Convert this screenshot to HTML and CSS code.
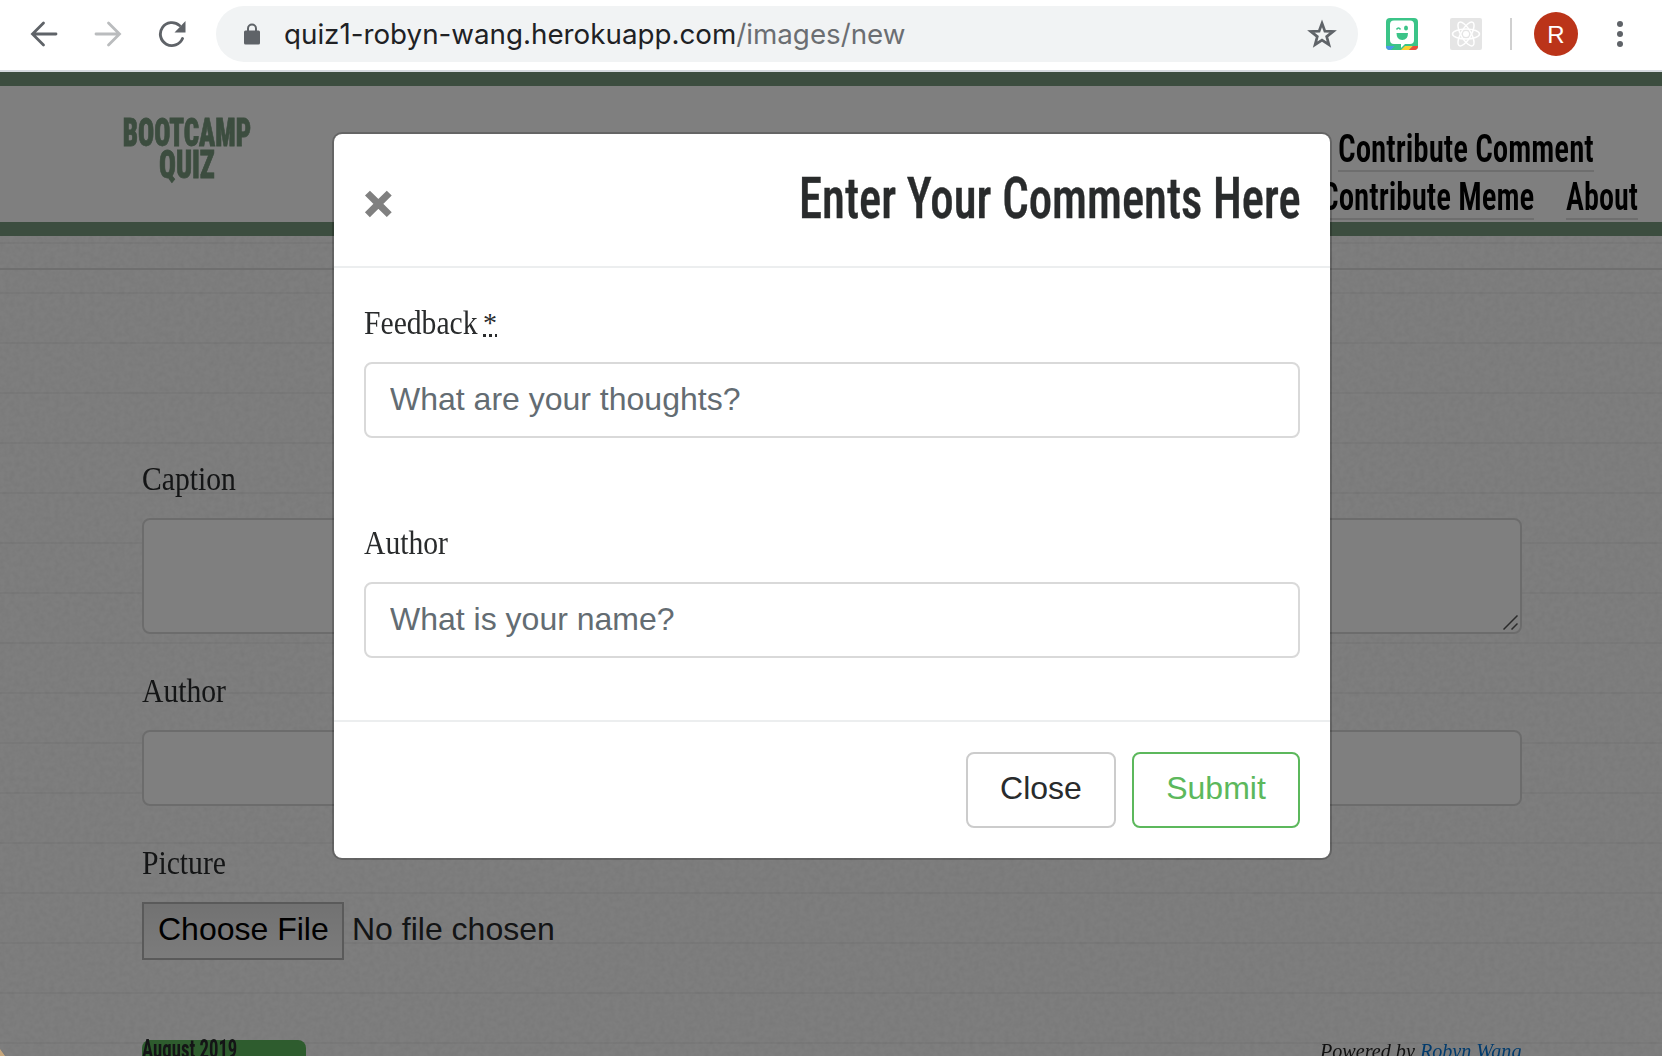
FILE: index.html
```html
<!DOCTYPE html>
<html lang="en">
<head>
<meta charset="utf-8">
<title>Bootcamp Quiz</title>
<link rel="stylesheet" href="styles.css">
</head>
<body>
<div class="toolbar">
  <div class="nav-icons">
    <svg width="28" height="28" viewBox="0 0 28 28" fill="none" stroke="#5f6368" stroke-width="2.8" stroke-linecap="round"><path d="M26 14H3.500M13.500 3L2.500 14l11 11"/></svg>
    <svg width="28" height="28" viewBox="0 0 28 28" fill="none" stroke="#babcbe" stroke-width="2.800" stroke-linecap="round"><path d="M2 14h22.500M14.500 3l11 11-11 11"/></svg>
    <svg width="28" height="28" viewBox="0 0 28 28"><path d="M24.500 18.500A11.500 11.500 0 1 1 21.500 5.500" fill="none" stroke="#5f6368" stroke-width="2.900" stroke-linecap="round"/><path d="M27.500 1v11.500H16.500z" fill="#5f6368"/></svg>
  </div>
  <div class="omnibox">
    <svg class="lock" width="16" height="22" viewBox="0 0 16 22"><path d="M4 9V5.500a4 4 0 0 1 8 0V9" fill="none" stroke="#5f6368" stroke-width="2"/><rect y="7.500" width="16" height="14" rx="1.500" fill="#5f6368"/></svg>
    <div class="url">quiz1-robyn-wang.herokuapp.com<span class="path">/images/new</span></div>
    <svg class="star" width="30" height="30" viewBox="0 0 30 30"><path d="M15 4.300l2.900 7.800 8.300.3-6.500 5.200 2.200 8-6.900-4.500-6.900 4.500 2.200-8-6.500-5.200 8.300-.3z" fill="none" stroke="#5f6368" stroke-width="2.700"/></svg>
  </div>
  <svg class="ext" width="32" height="32" viewBox="0 0 32 32">
    <defs><clipPath id="tile"><rect width="32" height="32" rx="4"/></clipPath></defs>
    <g clip-path="url(#tile)"><rect width="32" height="32" fill="#3bc488"/><path d="M0 28h9l-4 4H0z" fill="#4a9ae8"/><path d="M9 28h10l-4 4H5z" fill="#3bc488"/><path d="M19 28h8l-4 4h-8z" fill="#fdd130"/><path d="M27 28h5v4h-9z" fill="#ee4b3c"/></g>
    <path d="M8 2.500h16a4 4 0 0 1 4 4V22a4 4 0 0 1-4 4h-5l-4 4v-4H8a4 4 0 0 1-4-4V6.500a4 4 0 0 1 4-4z" fill="#fff"/>
    <path d="M10.500 15h11.500q0 7-5.750 7T10.500 15z" fill="#3bc488"/><ellipse cx="20" cy="10" rx="2" ry="2.500" fill="#3bc488"/><path d="M10.500 11.500q2-3 4 0" fill="none" stroke="#3bc488" stroke-width="1.600"/>
  </svg>
  <svg class="ext" width="32" height="32" viewBox="0 0 32 32"><rect width="32" height="32" rx="2" fill="#e5e5e5"/><g fill="none" stroke="#fff" stroke-width="1.500"><ellipse cx="16" cy="16" rx="13.500" ry="5"/><ellipse cx="16" cy="16" rx="13.500" ry="5" transform="rotate(60 16 16)"/><ellipse cx="16" cy="16" rx="13.500" ry="5" transform="rotate(120 16 16)"/></g><circle cx="16" cy="16" r="3" fill="#fff"/></svg>
  <div class="divider"></div>
  <div class="avatar">R</div>
  <svg class="dots" width="6" height="26" viewBox="0 0 6 26" fill="#5f6368"><circle cx="3" cy="3" r="3"/><circle cx="3" cy="13" r="3"/><circle cx="3" cy="23" r="3"/></svg>
</div>

<div class="page">
  <svg class="grain" width="100%" height="100%"><filter id="noise" x="0" y="0" width="100%" height="100%"><feTurbulence type="fractalNoise" baseFrequency="0.2" numOctaves="2" seed="4"/><feColorMatrix values="0 0 0 0 0  0 0 0 0 0  0 0 0 0 0  0.07 0 0 0 -0.02"/></filter><rect width="100%" height="100%" filter="url(#noise)"/></svg>
  <header class="site-header">
    <div class="logo"><span class="word">BOOTCAMP</span><span class="word quiz">QUIZ</span></div>
    <nav class="menu">
      <div class="menu-row first"><a class="link comment"><span>Contribute Comment</span></a></div>
      <div class="menu-row"><a class="link meme"><span>Contribute Meme</span></a><a class="link about"><span>About</span></a></div>
    </nav>
  </header>
  <hr class="rule">
  <main class="form">
    <label class="label"><span>Caption</span></label>
    <div class="field area"><svg class="grip" width="15" height="15" viewBox="0 0 15 15" stroke="#555" stroke-width="1.500"><path d="M0.500 14.500l14-14M8.500 14.500l6-6"/></svg></div>
    <label class="label"><span>Author</span></label>
    <div class="field"></div>
    <label class="label"><span>Picture</span></label>
    <div class="file"><span class="choose">Choose File</span><span class="none">No file chosen</span></div>
  </main>
  <footer class="footer">
    <div class="month"><span>August 2019</span></div>
    <div class="powered"><span>Powered by <a class="author">Robyn Wang</a></span></div>
  </footer>
</div>

<div class="backdrop">
  <div class="modal">
    <div class="modal-header"><button class="x">×</button><h2 class="title"><span>Enter Your Comments Here</span></h2></div>
    <div class="modal-body">
      <label class="label required"><span>Feedback</span><abbr>*</abbr></label>
      <input class="field" placeholder="What are your thoughts?">
      <label class="label second"><span>Author</span></label>
      <input class="field" placeholder="What is your name?">
    </div>
    <div class="modal-footer"><button class="btn close">Close</button><button class="btn submit">Submit</button></div>
  </div>
</div>
<div class="corner"></div>
</body>
</html>
```

FILE: styles.css
```css
* { box-sizing: border-box; }
body { margin: 0; height: 1056px; overflow: hidden; display: flex; flex-direction: column; position: relative; font: 32px "Liberation Sans", Arial, sans-serif; color: #292b2c; background: #fff; }
svg { display: block; flex: none; }

/* Browser toolbar */
.toolbar { flex: none; height: 72px; padding: 0 39px 2px 30px; border-bottom: 2px solid #d5d9de; display: flex; align-items: flex-start; background: #fff; }
.nav-icons { display: flex; gap: 36px; width: 186px; padding-top: 20px; }
.omnibox { width: 1142px; height: 56px; margin-top: 6px; border-radius: 28px; background: #f1f3f4; display: flex; }
.lock { margin: 17px 0 0 28px; }
.url { margin-left: 24px; flex: 1; font: 27.75px/56px Inter, sans-serif; color: #202124; white-space: nowrap; }
.path { color: #6b6e72; }
.star { margin: 13px 21px 0 0; }
.ext { margin: 18px 0 0 28px; }
.ext + .ext { margin-left: 32px; }
.divider { width: 2px; height: 32px; margin: 18px 0 0 28px; background: #d0d0d0; }
.avatar { width: 44px; height: 44px; margin: 12px 0 0 22px; border-radius: 50%; background: #bb3419; color: #fff; font: 24px/45px "Liberation Sans", sans-serif; text-align: center; }
.dots { margin: 21px 0 0 39px; }

/* Page under the modal */
.page { flex: 1; min-height: 0; overflow: hidden; position: relative; background: #fdfdfd repeating-linear-gradient(transparent 0 20px, #f3f3f3 20px 22px, transparent 22px 50px) 0 150px no-repeat; }
.grain { position: absolute; inset: 0; }
.site-header { position: relative; height: 164px; border: solid #789a7e; border-width: 14px 0; background: #fff; display: flex; justify-content: space-between; font-family: Roboto, sans-serif; font-stretch: 75%; font-size: 38px; color: #000; }
.logo { width: 129px; margin: 31px 0 0 122px; display: flex; flex-direction: column; align-items: center; font-weight: 900; line-height: 32px; color: #789a7e; -webkit-text-stroke: .8px #789a7e; }
.word { transform: scaleX(.705); }
.quiz { transform: scaleX(.735); }
.menu { padding-top: 39px; margin-right: 24px; font-weight: 600; line-height: 48px; }
.menu-row { display: flex; justify-content: flex-end; gap: 32px; height: 48px; }
.first { padding-right: 44px; }
.link { height: 47px; border-bottom: 2px solid #dcdcdc; white-space: nowrap; }
.link span, .label span, .month span, .powered span, .title span { display: inline-block; transform-origin: left; }
.comment { width: 256px; }
.meme { width: 213px; }
.about { width: 72px; }
.link span { transform: scaleX(.815); }
.about span { transform: scaleX(.796); }
.rule { position: relative; margin: 32px 0 0; border: 0; height: 2px; background: #dfdfdf; }
.form { position: relative; padding: 184px 140px 0 142px; }
.label { display: flex; height: 50px; margin: 0 0 14px; font: 33px/50px "Liberation Serif", serif; white-space: nowrap; }
.label span { transform: scaleX(.898); }
.field { display: block; width: 100%; height: 76px; border: 2px solid #d9d9d9; border-radius: 8px; background: #fff; font: 32px "Liberation Sans", Arial, sans-serif; padding: 0 24px 2px; outline: 0; }
.field::placeholder { color: #636c72; opacity: 1; }
.area { height: 116px; padding: 0 2px 2px 0; display: flex; align-items: flex-end; justify-content: flex-end; }
.form .field + .label { margin-top: 32px; }
.file { display: flex; height: 58px; line-height: 50px; }
.choose { width: 202px; border: 2px solid #b5b5b5; padding-left: 14px; color: #000; background: linear-gradient(#e4e4e4, #f8f8f8); white-space: nowrap; }
.none { margin-left: 8px; line-height: 54px; }
.footer { position: relative; margin-top: 80px; padding: 0 140px 0 142px; display: flex; justify-content: space-between; }
.month { width: 164px; height: 60px; border-radius: 8px; background: #5cb85c; font: 700 26px/19px Roboto, sans-serif; font-stretch: 75%; white-space: nowrap; }
.month span { transform: scaleX(.72); }
.powered { width: 202px; font: italic 22px/22px "Liberation Serif", serif; white-space: nowrap; color: #222; }
.powered span { transform: scaleX(.915); }
.author { color: #0275d8; }

/* Modal */
.backdrop { position: absolute; inset: 72px 0 0; padding: 60px 330px 0 332px; background: rgba(0, 0, 0, .5); }
.modal { width: 1000px; height: 728px; border: 2px solid rgba(0, 0, 0, .2); border-radius: 10px; background: #fff; background-clip: padding-box; }
.modal-header { height: 134px; padding: 32px 30px 0; border-bottom: 2px solid #eceeef; display: flex; justify-content: space-between; }
.x { margin: 5px 0 0; padding: 0; border: 0; background: none; width: 28px; height: 64px; font: bold 49px/64px "Liberation Sans", Arial, sans-serif; color: #808080; -webkit-text-stroke: 1.6px #808080; }
.title { margin: 1px 0 0; width: 501px; font: 500 57px/64px Roboto, sans-serif; font-stretch: 75%; white-space: nowrap; -webkit-text-stroke: .4px; }
.title span { transform: scaleX(.82); }
.modal-body { height: 452px; padding: 30px 30px 0; }
.required span { width: 119px; }
abbr { text-decoration: underline dotted 2.500px; text-underline-offset: 2px; font-size: 28px; }
.second { margin-top: 80px; }
.modal-footer { height: 138px; padding: 30px; border-top: 2px solid #eceeef; display: flex; justify-content: flex-end; gap: 16px; }
.btn { height: 76px; padding: 0 0 3px; border: 2px solid #ccc; border-radius: 8px; background: #fff; font: 32px "Liberation Sans", Arial, sans-serif; color: #292b2c; }
.close { width: 150px; }
.submit { width: 168px; border-color: #5cb85c; color: #5cb85c; }
.corner { position: absolute; left: 0; bottom: 0; width: 5px; height: 7px; background: linear-gradient(to top right, #c7a77c 45%, transparent 55%); }
```
